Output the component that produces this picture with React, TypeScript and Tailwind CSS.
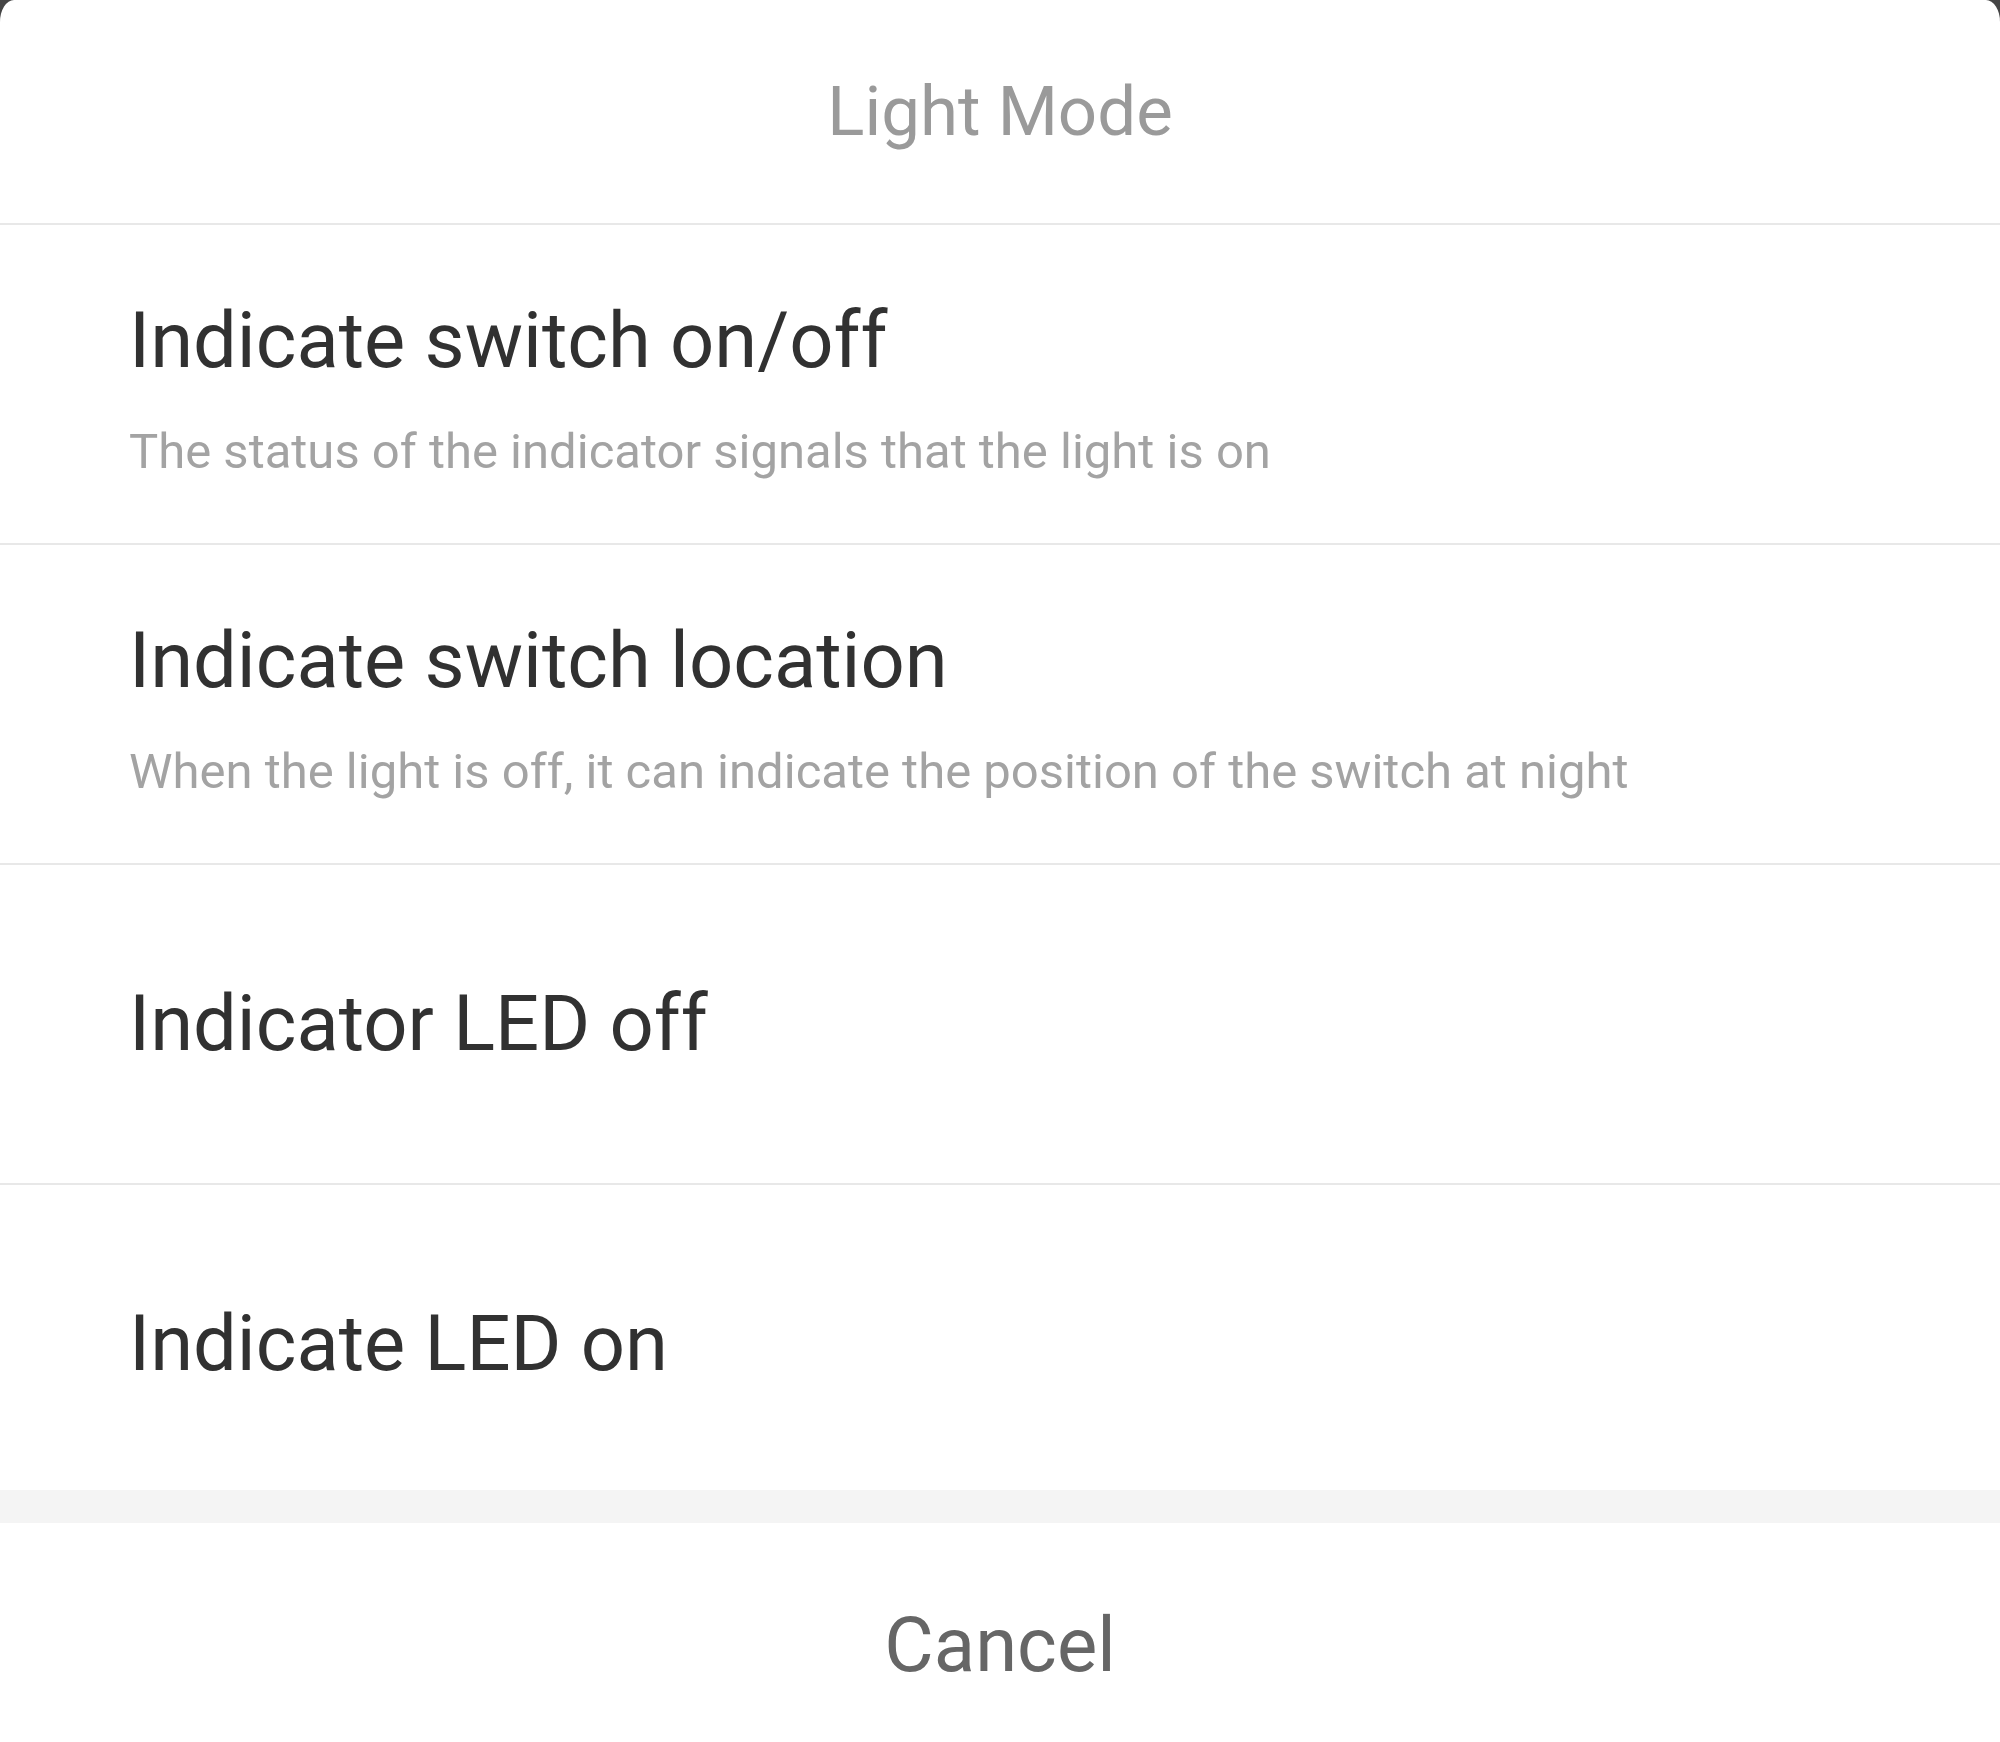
import React from 'react';

interface OptionRow {
    title: string;
    description?: string;
}

const options: OptionRow[] = [
    { title: 'Indicate switch on/off', description: 'The status of the indicator signals that the light is on' },
    { title: 'Indicate switch location', description: 'When the light is off, it can indicate the position of the switch at night' },
    { title: 'Indicator LED off' },
    { title: 'Indicate LED on' },
];

const Row: React.FC<{ option: OptionRow; last?: boolean }> = ({ option, last }) => {
    if (option.description) {
        return (
            <div className="h-[320px] border-t-2 border-[#e8e8e8] pl-[129px] pt-[71px]">
                <div className="text-[77.7px] leading-[90px] text-[#313131]">{option.title}</div>
                <div className="mt-[36px] text-[49px] leading-[60px] text-[#a3a3a3]">{option.description}</div>
            </div>
        );
    }
    return (
        <div className={`${last ? 'h-[307px]' : 'h-[320px]'} border-t-2 border-[#e8e8e8] pl-[129px] pt-[114px]`}>
            <div className="text-[77.7px] leading-[90px] text-[#313131]">{option.title}</div>
        </div>
    );
};

export default function App() {
    return (
        <div className="w-[2000px] h-[1742px] bg-[#454545] overflow-hidden" style={{ fontFamily: 'Roboto, "Noto Sans", sans-serif' }}>
            <div className="h-full bg-white rounded-tl-[14px_22px] rounded-tr-[14px_22px] flex flex-col">
                {/* Sheet header */}
                <div className="h-[223px] pt-[70px] text-center text-[69px] leading-[84px] text-[#9a9a9a]">Light Mode</div>

                {/* Options */}
                {options.map((option, i) => (
                    <Row key={option.title} option={option} last={i === options.length - 1} />
                ))}

                {/* Spacer band */}
                <div className="h-[33px] bg-[#f4f4f4] shrink-0" />

                {/* Cancel */}
                <div className="flex-1 pt-[77px] text-center text-[76px] leading-[90px] text-[#666666]">Cancel</div>
            </div>
        </div>
    );
}
